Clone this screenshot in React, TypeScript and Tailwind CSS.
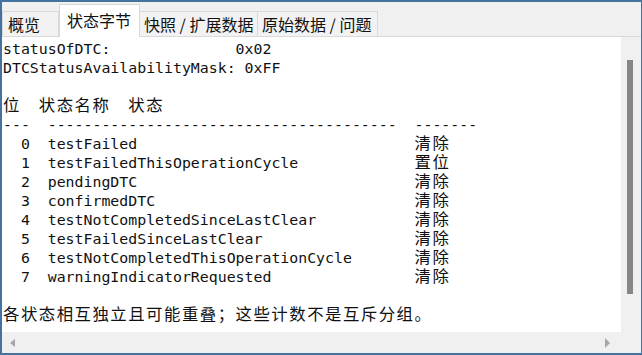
import React from "react";

const MONO = "font-['DejaVu_Sans_Mono',monospace]";

function Cjk({ children }: { children: React.ReactNode }) {
  return (
    <span className="font-['Noto_Sans_CJK_SC',sans-serif] text-[16.4px] tracking-[1.5px] leading-[15px]">
      {children}
    </span>
  );
}

const rows: [number, string, string][] = [
  [0, "testFailed", "清除"],
  [1, "testFailedThisOperationCycle", "置位"],
  [2, "pendingDTC", "清除"],
  [3, "confirmedDTC", "清除"],
  [4, "testNotCompletedSinceLastClear", "清除"],
  [5, "testFailedSinceLastClear", "清除"],
  [6, "testNotCompletedThisOperationCycle", "清除"],
  [7, "warningIndicatorRequested", "清除"],
];

function Line({ children }: { children?: React.ReactNode }) {
  return <div className="h-[19px] leading-[19px] whitespace-pre">{children}</div>;
}

export default function App() {
  const tabBase =
    "font-['Noto_Sans_CJK_SC',sans-serif] text-[16px] text-[#111] whitespace-pre border-t border-l border-r border-[#d9d9d9]";
  return (
    <div className="w-[642px] h-[355px] bg-[#f0f0f0] border-t-2 border-l-2 border-r border-b-2 border-[#44739f] flex flex-col overflow-hidden">
      {/* Tab strip */}
      <div className="h-[34px] flex items-end shrink-0">
        <div className={`${tabBase} w-[57px] h-[25px] pl-[5px] leading-[24px] bg-[#f2f2f2]`}>概览</div>
        <div className={`${tabBase} w-[81px] h-[33px] pl-[7px] leading-[30px] bg-white -mb-px relative z-10`}>状态字节</div>
        <div className={`${tabBase} w-[118px] h-[25px] pl-[4px] leading-[24px] bg-[#f2f2f2] border-l-0`}>快照 / 扩展数据</div>
        <div className={`${tabBase} w-[120px] h-[25px] pl-[4px] leading-[24px] bg-[#f2f2f2] border-l-0`}>原始数据 / 问题</div>
      </div>
      {/* Body */}
      <div className="flex-1 flex flex-col border-t border-[#d9d9d9]">
        <div className="flex-1 flex min-h-0">
          <div className={`w-[619px] bg-white pt-[3px] pl-[1px] text-[14.87px] text-[#111] ${MONO}`}>
            <Line>{"statusOfDTC:".padEnd(26) + "0x02"}</Line>
            <Line>DTCStatusAvailabilityMask: 0xFF</Line>
            <Line />
            <Line>
              <Cjk>位</Cjk>
              {"  "}
              <Cjk>状态名称</Cjk>
              {"  "}
              <Cjk>状态</Cjk>
            </Line>
            <Line>{"---  " + "-".repeat(39) + "  " + "-".repeat(7)}</Line>
            {rows.map(([b, n, s]) => (
              <Line key={b}>
                {"  " + b + "  " + n.padEnd(41)}
                <Cjk>{s}</Cjk>
              </Line>
            ))}
            <Line />
            <Line>
              <Cjk>各状态相互独立且可能重叠；这些计数不是互斥分组。</Cjk>
            </Line>
          </div>
          <div className="flex-1 pt-[23px] pl-[6px]">
            <div className="w-[6px] h-[234px] bg-[#868686]" />
          </div>
        </div>
        <div className="h-[21px] shrink-0 flex items-center justify-between pl-[7px] pr-[30px]">
          <svg width="7" height="10" viewBox="0 0 7 10">
            <polygon points="6,1 1,5 6,9" fill="#a6a6a6" />
          </svg>
          <svg width="7" height="10" viewBox="0 0 7 10">
            <polygon points="1,0 6,5 1,10" fill="#a6a6a6" />
          </svg>
        </div>
      </div>
    </div>
  );
}
